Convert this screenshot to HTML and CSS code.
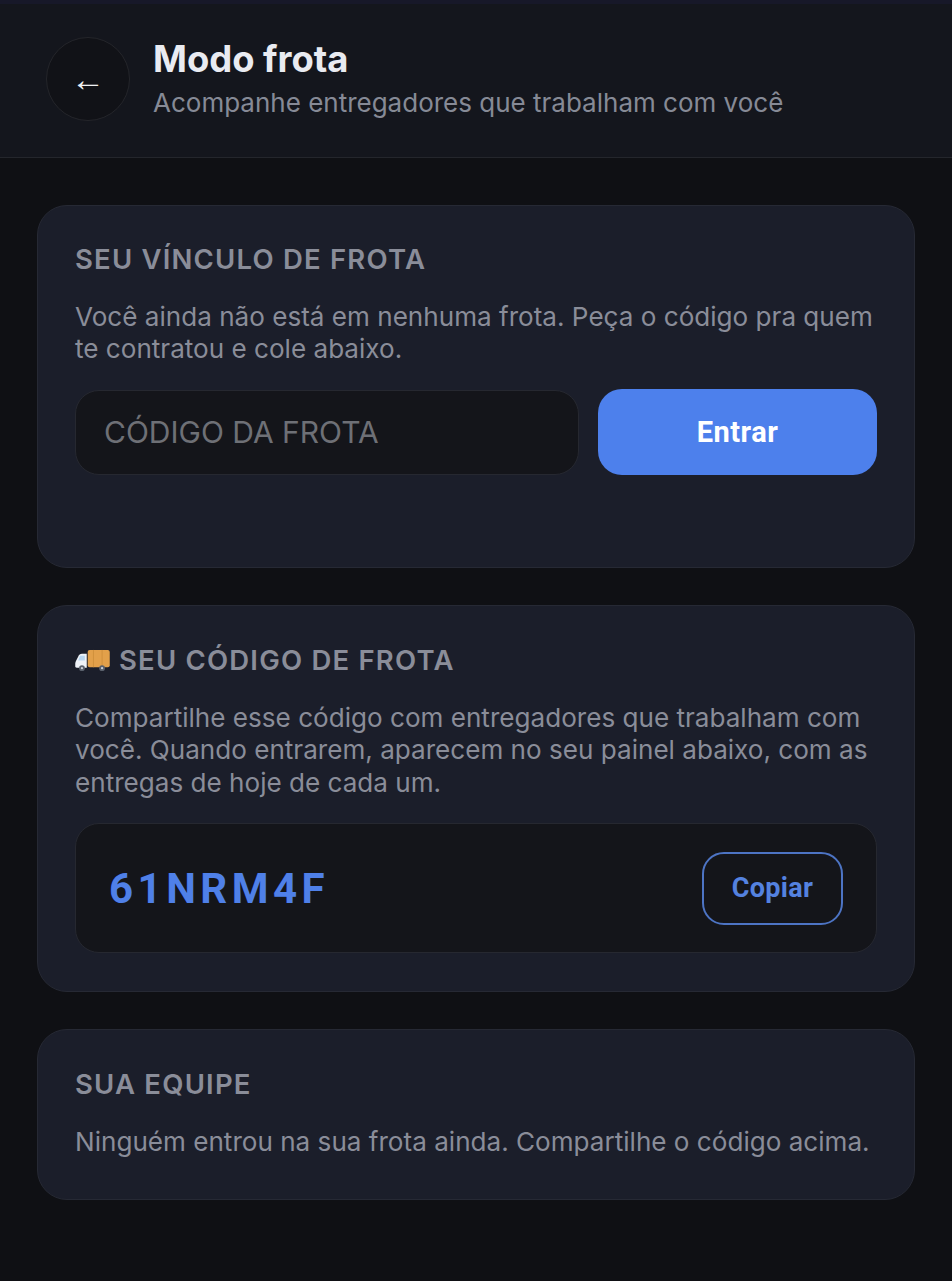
FILE: index.html
```html
<!DOCTYPE html>
<html>
<head>
  <title>Modo frota</title>
  <link rel="stylesheet" href="styles.css">
</head>
<body>
  <div class="header">
    <button class="back-btn">←</button>
    <div class="header-text">
      <h1>Modo frota</h1>
      <p>Acompanhe entregadores que trabalham com você</p>
    </div>
  </div>

  <div class="content">
    <div class="card card-join">
      <h2>SEU VÍNCULO DE FROTA</h2>
      <p>Você ainda não está em nenhuma frota. Peça o código pra quem te contratou e cole abaixo.</p>
      <div class="join-row">
        <input class="code-input" type="text" placeholder="CÓDIGO DA FROTA">
        <button class="join-btn">Entrar</button>
      </div>
    </div>

    <div class="card">
      <h2>
        <svg class="truck" viewBox="0 0 36 24" width="35" height="23">
          <rect x="13" y="1" width="23" height="18" rx="2" fill="#e2a04a"/>
          <path d="M19 1v18M28 1v18" stroke="#cf8f3c" stroke-width="1"/>
          <path d="M12 5H7C5 5 4 6 3 8L1 12C0.5 13 0 14 0 15v3c0 1 .6 1.500 1.500 1.500H12z" fill="#eef2f7"/>
          <path d="M5 7h5v5H3z" fill="#b9d6f0"/>
          <circle cx="7" cy="20" r="3" fill="#59606b"/>
          <circle cx="7" cy="20" r="1.200" fill="#c9ced6"/>
          <circle cx="28" cy="20" r="3" fill="#59606b"/>
          <circle cx="28" cy="20" r="1.200" fill="#c9ced6"/>
        </svg>
        SEU CÓDIGO DE FROTA
      </h2>
      <p>Compartilhe esse código com entregadores que trabalham com você. Quando entrarem, aparecem no seu painel abaixo, com as entregas de hoje de cada um.</p>
      <div class="code-box">
        <span class="code-value">61NRM4F</span>
        <button class="copy-btn">Copiar</button>
      </div>
    </div>

    <div class="card">
      <h2>SUA EQUIPE</h2>
      <p>Ninguém entrou na sua frota ainda. Compartilhe o código acima.</p>
    </div>
  </div>
</body>
</html>
```

FILE: styles.css
```css
body {
  margin: 0;
  min-height: 1281px;
  background-color: #0f1014;
  font-family: Inter, "Liberation Sans", sans-serif;
  color: #8f929e;
}

.header {
  display: flex;
  align-items: center;
  gap: 23px;
  box-sizing: border-box;
  height: 158px;
  padding: 0 46px 4px;
  background: #14161d;
  border-top: 4px solid #171829;
  border-bottom: 1px solid #24262c;
}

.back-btn {
  width: 84px;
  height: 84px;
  flex-shrink: 0;
  padding: 0;
  border: 1px solid #24252a;
  border-radius: 50%;
  background: #111217;
  color: #f0f1f4;
  font-family: Roboto, sans-serif;
  font-size: 34px;
  line-height: 1;
}

.header-text {
  margin-top: -2px;
}

.header-text h1 {
  margin: 0 0 6px;
  font-size: 36.400px;
  line-height: 44px;
  font-weight: 700;
  color: #e9ebf1;
}

.header-text p {
  margin: 0;
  font-size: 26px;
  line-height: 32px;
  color: #868a96;
}

.content {
  display: flex;
  flex-direction: column;
  gap: 37px;
  padding: 47px 37px 0;
}

.card {
  padding: 38px 37px 40.600px;
  background: #1b1e2a;
  border: 1px solid #262934;
  border-radius: 30px;
}

.card-join {
  padding-top: 37px;
  padding-bottom: 92px;
}

.card h2 {
  display: flex;
  align-items: center;
  gap: 9px;
  margin: 0 0 26px;
  font-size: 27.500px;
  line-height: 32px;
  font-weight: 600;
  letter-spacing: 1.200px;
  color: #8a8d99;
}

.card p {
  margin: 0;
  font-size: 26.100px;
  line-height: 32.400px;
  color: #8a8d99;
}

.join-row {
  display: flex;
  gap: 19px;
  align-items: center;
  margin-top: 23.200px;
}

.code-input {
  flex: 1;
  min-width: 0;
  box-sizing: border-box;
  height: 85px;
  padding: 0 28px;
  background: #14151a;
  border: 1px solid #262830;
  border-radius: 24px;
  color: #e5e7ec;
  font-family: inherit;
  font-size: 30px;
}

.code-input::placeholder {
  color: #6e7076;
  opacity: 1;
}

.join-btn {
  width: 279px;
  height: 86px;
  border: 0;
  border-radius: 24px;
  background: #4d80ec;
  color: #fff;
  font-family: Roboto, sans-serif;
  font-size: 29px;
  font-weight: 700;
  letter-spacing: 0.500px;
}

.code-box {
  display: flex;
  align-items: center;
  justify-content: space-between;
  height: 130px;
  box-sizing: border-box;
  margin-top: 23.800px;
  margin-bottom: -2.600px;
  padding: 0 33px;
  background: #14151a;
  border: 1px solid #262830;
  border-radius: 24px;
}

.code-value {
  font-family: Roboto, sans-serif;
  font-size: 42px;
  font-weight: 700;
  letter-spacing: 4.500px;
  color: #4f80e8;
}

.copy-btn {
  width: 141px;
  height: 73px;
  background: transparent;
  border: 2px solid #4d74c4;
  border-radius: 22px;
  color: #5482e0;
  font-family: Roboto, sans-serif;
  font-size: 27px;
  font-weight: 700;
  letter-spacing: 0.300px;
}
```
